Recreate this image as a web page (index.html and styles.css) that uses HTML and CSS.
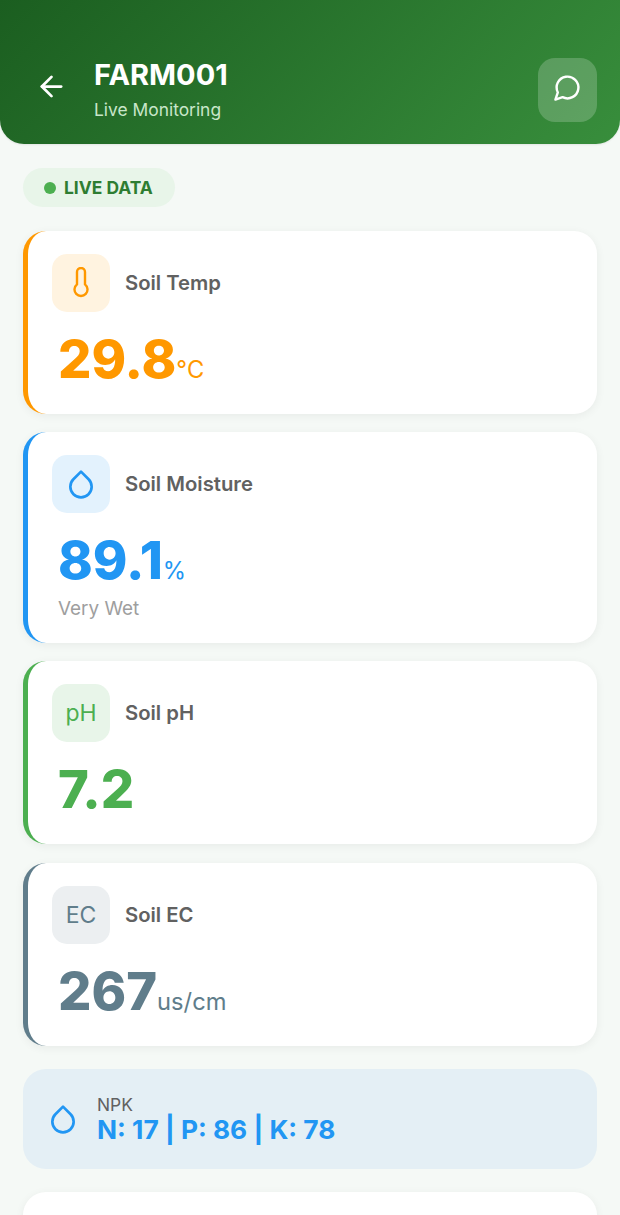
FILE: index.html
```html
<html>
	<head>
		<link rel="stylesheet" href="styles.css">
	</head>
	<body>
		<div class="header">
			<svg class="backIcon" width="33" height="33" viewBox="0 0 24 24" fill="none" stroke="#fff" stroke-width="2" stroke-linecap="round" stroke-linejoin="round"><path d="M19 12H5"/><path d="M12 19l-7-7 7-7"/></svg>
			<div class="titleBox">
				<div class="title">FARM001</div>
				<div class="subtitle">Live Monitoring</div>
			</div>
			<div class="chatBtn">
				<svg class="chatIcon" width="29" height="29" viewBox="0 0 24 24" fill="none" stroke="#fff" stroke-width="2" stroke-linecap="round" stroke-linejoin="round"><path d="M7.9 20A9 9 0 1 0 4 16.1L2 22Z"/></svg>
			</div>
		</div>
		<div class="content">
			<div class="livePill"><span class="liveDot"></span>LIVE DATA</div>

			<div class="card cardTemp">
				<div class="cardTop">
					<div class="iconBox">
						<svg width="20" height="32" viewBox="0 1 20 32" fill="none" stroke="currentColor" stroke-width="2.4" stroke-linecap="round" stroke-linejoin="round"><path d="M6 18.4V6a4 4 0 0 1 8 0V18.4A6.5 6.5 0 1 1 6 18.4Z"/></svg>
					</div>
					<div class="cardLabel">Soil Temp</div>
				</div>
				<div class="value">29.8<span class="unit">°C</span></div>
			</div>

			<div class="card cardMoist">
				<div class="cardTop">
					<div class="iconBox">
						<svg width="32" height="32" viewBox="0 0 24 24" fill="none" stroke="currentColor" stroke-width="2" stroke-linecap="round" stroke-linejoin="round"><path d="M12 2.7l5.7 5.7a8 8 0 1 1-11.4 0Z"/></svg>
					</div>
					<div class="cardLabel">Soil Moisture</div>
				</div>
				<div class="value">89.1<span class="unit">%</span></div>
				<div class="note">Very Wet</div>
			</div>

			<div class="card cardPh">
				<div class="cardTop">
					<div class="iconBox iconText">pH</div>
					<div class="cardLabel">Soil pH</div>
				</div>
				<div class="value">7.2</div>
			</div>

			<div class="card cardEc">
				<div class="cardTop">
					<div class="iconBox iconText">EC</div>
					<div class="cardLabel">Soil EC</div>
				</div>
				<div class="value">267<span class="unit">us/cm</span></div>
			</div>

			<div class="npk">
				<svg width="32" height="32" viewBox="0 0 24 24" fill="none" stroke="#2196f3" stroke-width="2" stroke-linecap="round" stroke-linejoin="round"><path d="M12 2.7l5.7 5.7a8 8 0 1 1-11.4 0Z"/></svg>
				<div>
					<div class="npkLabel">NPK</div>
					<div class="npkValue">N: 17 | P: 86 | K: 78</div>
				</div>
			</div>

			<div class="card cardLast"></div>
		</div>
	</body>
</html>
```

FILE: styles.css
```css
html, body {
	margin: 0;
	height: 1215px;
	overflow: hidden;
}
body {
	background-color: #f5f9f6;
	font-family: "Inter", "Liberation Sans", sans-serif;
}
.header {
	height: 144px;
	box-sizing: border-box;
	padding: 58px 23px 0 35px;
	display: flex;
	align-items: flex-start;
	background-image: linear-gradient(135deg, #1b5e20, #388e3c);
	border-radius: 0 0 24px 24px;
	box-shadow: 0 1px 2px rgba(0,0,0,0.08);
}
.backIcon {
	margin-top: 12px;
	margin-right: 26px;
}
.titleBox {
	flex: 1;
}
.title {
	font-size: 29px;
	line-height: 34px;
	font-weight: 700;
	color: #fff;
}
.subtitle {
	margin-top: 7px;
	font-size: 17.4px;
	line-height: 21px;
	color: #c8e6c9;
}
.chatBtn {
	width: 59px;
	height: 64px;
	border-radius: 17px;
	background-color: rgba(255,255,255,0.2);
	display: flex;
	align-items: center;
	justify-content: center;
}
.chatIcon {
	margin-bottom: 6px;
}
.content {
	padding: 24px 23px 0;
}
.livePill {
	display: inline-flex;
	align-items: center;
	height: 39px;
	width: 152px;
	box-sizing: border-box;
	padding-left: 21px;
	border-radius: 20px;
	background-color: #e8f5e9;
	color: #2e7d32;
	font-size: 17.4px;
	font-weight: 700;
	vertical-align: top;
}
.liveDot {
	width: 12px;
	height: 12px;
	margin-right: 8px;
	border-radius: 50%;
	background-color: #4caf50;
}
.card {
	box-sizing: border-box;
	min-height: 183px;
	margin-top: 18px;
	padding: 23px 24px 0;
	background-color: #fff;
	border-left: 5px solid;
	border-radius: 23px;
	box-shadow: 0 2px 10px rgba(0,0,0,0.06);
}
.cardTemp {
	margin-top: 24px;
	color: #ff9800;
}
.cardMoist {
	height: 211px;
	color: #2196f3;
}
.cardPh {
	color: #4caf50;
}
.cardEc {
	margin-top: 19px;
	color: #607d8b;
}
.cardTop {
	display: flex;
	align-items: center;
}
.iconBox {
	width: 58px;
	height: 58px;
	margin-right: 15px;
	border-radius: 15px;
	display: flex;
	align-items: center;
	justify-content: center;
}
.cardTemp .iconBox {
	background-color: #fff3e0;
}
.cardMoist .iconBox {
	background-color: #e3f2fd;
}
.cardPh .iconBox {
	background-color: #e8f5e9;
}
.cardEc .iconBox {
	background-color: #eceff1;
}
.iconText {
	font-size: 23px;
}
.cardLabel {
	margin-bottom: 1px;
	font-size: 20.3px;
	font-weight: 600;
	color: #616161;
}
.value {
	margin: 14px 0 0 6px;
	font-size: 52.5px;
	line-height: 66px;
	font-weight: 800;
}
.unit {
	font-size: 23.7px;
	font-weight: 400;
}
.note {
	margin: -7px 0 0 6px;
	font-size: 18.9px;
	line-height: 24px;
	color: #9e9e9e;
}
.npk {
	display: flex;
	align-items: center;
	height: 100px;
	margin-top: 23px;
	padding-left: 24px;
	gap: 18px;
	background-color: #e4eff5;
	border-radius: 23px;
}
.npkLabel {
	font-size: 17.4px;
	line-height: 20px;
	margin-top: 2px;
	color: #616161;
}
.npkValue {
	font-size: 26.3px;
	line-height: 30px;
	font-weight: 700;
	color: #2196f3;
}
.cardLast {
	margin-top: 23px;
	border-left: 0;
}
```
